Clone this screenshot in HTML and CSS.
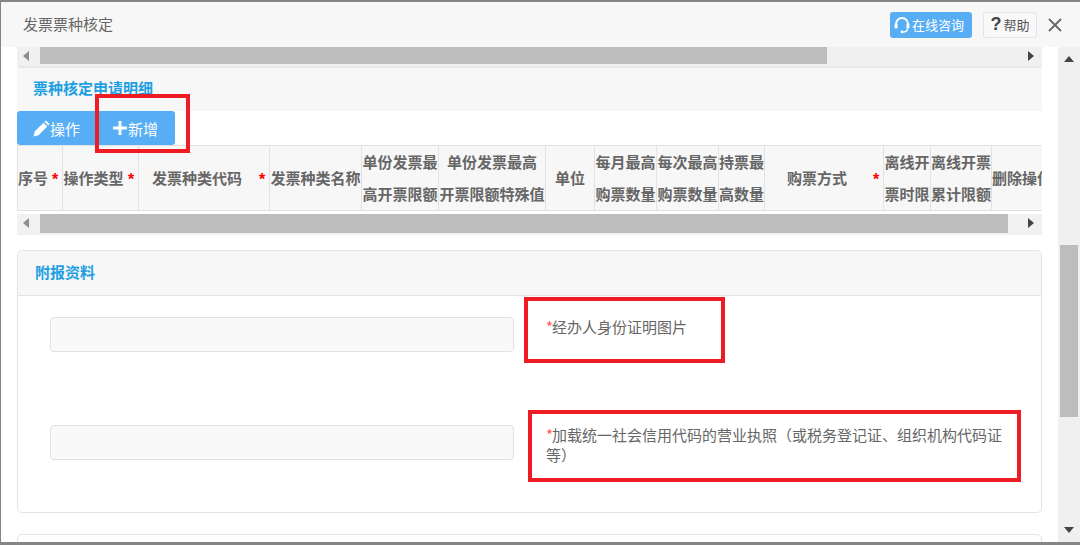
FILE: index.html
```html
<!DOCTYPE html>
<html lang="zh">
<head>
<meta charset="utf-8">
<title>发票票种核定</title>
<link rel="stylesheet" href="styles.css">
</head>
<body>
<div class="dialog">
  <header class="dlg-head">
    <h1 class="dlg-title">发票票种核定</h1>
    <a class="btn-online">
      <svg class="ico-headset" viewBox="0 0 16 18" width="16" height="18"><path d="M2 11V8a6 6 0 0 1 12 0v3" fill="none" stroke="#fff" stroke-width="1.8"/><rect x="0.6" y="7.5" width="3" height="5" rx="1.2" fill="#fff"/><rect x="12.4" y="7.5" width="3" height="5" rx="1.2" fill="#fff"/><path d="M13.5 12.5c0 2.5-2 3.6-5 3.6" fill="none" stroke="#fff" stroke-width="1.4"/><circle cx="8" cy="16" r="1.4" fill="#fff"/></svg>
      <span>在线咨询</span>
    </a>
    <a class="btn-help"><span class="q">?</span><span>帮助</span></a>
    <svg class="ico-close" viewBox="0 0 14 14" width="14" height="14"><path d="M1 1l12 12M13 1L1 13" stroke="#666" stroke-width="1.8" fill="none"/></svg>
  </header>
  <div class="dlg-main">
    <div class="content">
      <div class="hbar hbar-top">
        <i class="arr arr-l"></i><i class="thumb thumb-a"></i><i class="arr arr-r"></i>
      </div>
      <div class="section-title"><h2>票种核定申请明细</h2></div>
      <div class="btn-group">
        <a class="tool-btn tool-a">
          <svg viewBox="0 0 17 17" width="17" height="17"><path d="M0.500 16.500l1.200-5L10.500 2.700l3.800 3.800-8.800 8.800z M11.500 1.700l1.400-1.200 3.600 3.600-1.200 1.400z" fill="#fff"/></svg>操作
        </a>
        <a class="tool-btn tool-b">
          <svg viewBox="0 0 14 14" width="14" height="14"><path d="M5.500 0h3v5.500H14v3H8.500V14h-3V8.500H0v-3h5.500z" fill="#fff"/></svg>新增
        </a>
      </div>
      <div class="table-wrap">
        <table class="grid">
          <colgroup>
            <col class="c1"><col class="c2"><col class="c3"><col class="c4"><col class="c5"><col class="c6"><col class="c7"><col class="c8"><col class="c9"><col class="c10"><col class="c11"><col class="c12"><col class="c13"><col class="c14">
          </colgroup>
          <tr>
            <th><div class="req"><span>序号</span><b>*</b></div></th>
            <th><div class="req"><span>操作类型</span><b>*</b></div></th>
            <th><div class="req"><span>发票种类代码</span><b>*</b></div></th>
            <th>发票种类名称</th>
            <th>单份发票最<br>高开票限额</th>
            <th>单份发票最高<br>开票限额特殊值</th>
            <th>单位</th>
            <th>每月最高<br>购票数量</th>
            <th>每次最高<br>购票数量</th>
            <th>持票最<br>高数量</th>
            <th><div class="req"><span>购票方式</span><b>*</b></div></th>
            <th>离线开<br>票时限</th>
            <th>离线开票<br>累计限额</th>
            <th class="last">删除操作</th>
          </tr>
        </table>
      </div>
      <div class="hbar hbar-low">
        <i class="arr arr-l"></i><i class="thumb thumb-b"></i><i class="arr arr-r"></i>
      </div>
      <section class="panel">
        <div class="panel-head"><h2>附报资料</h2></div>
        <div class="panel-body">
          <div class="row">
            <div class="file-input"></div>
            <p class="label"><em>*</em>经办人身份证明图片</p>
          </div>
          <div class="row">
            <div class="file-input"></div>
            <p class="label"><em>*</em>加载统一社会信用代码的营业执照（或税务登记证、组织机构代码证等）</p>
          </div>
        </div>
      </section>
      <section class="panel panel-next"></section>
    </div>
    <div class="vbar">
      <i class="arr arr-u"></i><i class="vthumb"></i><i class="arr arr-d"></i>
    </div>
  </div>
</div>
<div class="mark mark-1"></div>
<div class="mark mark-2"></div>
<div class="mark mark-3"></div>
</body>
</html>
```

FILE: styles.css
```css
* { box-sizing: border-box; }
html, body { margin: 0; padding: 0; }
body {
  width: 1080px;
  height: 545px;
  overflow: hidden;
  background: #858585;
  font-family: "Noto Sans CJK SC", "Liberation Sans", sans-serif;
  font-size: 15px;
  color: #666;
  position: relative;
}
h1, h2, p { margin: 0; font-size: 15px; }
.dialog {
  margin: 2px 0 0 1px;
  width: 1079px;
  height: 540px;
  background: #fff;
  display: flex;
  flex-direction: column;
  overflow: hidden;
}
.dlg-head {
  height: 45px;
  flex: none;
  background: #f7f7f7;
  display: flex;
  align-items: center;
  padding: 0 18px 4px 22px;
}
.dlg-title { font-weight: 400; color: #666; line-height: 20px; margin-right: auto; margin-top: 2px; }
.btn-online {
  width: 82px;
  height: 26px;
  background: #57aef5;
  border-radius: 3px;
  color: #fff;
  font-size: 13px;
  display: flex;
  align-items: center;
  padding-left: 4px;
  gap: 2px;
  margin-top: 4px;
}
.btn-help {
  width: 54px;
  height: 26px;
  margin: 4px 11px 0 11px;
  border: 1px solid #e4e4e4;
  border-radius: 3px;
  background: #f9f9f9;
  font-size: 13px;
  color: #555;
  display: flex;
  align-items: center;
  justify-content: center;
}
.q { font: bold 18px "Liberation Sans", sans-serif; color: #444; margin-right: 2px; }
.ico-close { margin-top: 4px; flex: none; }
.dlg-main { flex: 1; display: flex; min-height: 0; }
.content { width: 1057px; padding: 0 16px; overflow: hidden; }
.hbar {
  height: 21px;
  background: #f0f0f0;
  display: flex;
  align-items: flex-start;
}
.hbar-top { border-bottom: 2px solid #e8e8e8; border-radius: 0 0 3px 3px; }
.hbar-low { height: 21px; margin-top: 3px; background: #f1f1f1; }
.arr { display: block; width: 0; height: 0; border-style: solid; flex: none; }
.arr-l { border-width: 5px 6px 5px 0; border-color: transparent #8e8e8e transparent transparent; margin: 4px 11px 0 6px; }
.arr-r { border-width: 5px 0 5px 6px; border-color: transparent transparent transparent #444; margin: 4px 8px 0 auto; }
.thumb { display: block; background: #bdbdbd; height: 18px; flex: none; }
.thumb-a { width: 787px; height: 17px; }
.thumb-b { width: 968px; height: 19px; }
.section-title {
  height: 43px;
  background: #f7f7f7;
  padding: 10px 16px 0;
}
.section-title h2, .panel-head h2 { color: #1d9fe2; font-weight: 700; line-height: 20px; }
.btn-group { display: flex; height: 34px; }
.tool-btn {
  height: 34px;
  background: #57aef5;
  color: #fff;
  font-size: 15px;
  display: flex;
  align-items: center;
  border-radius: 3px 0 0 3px;
}
.tool-a { width: 79px; padding-left: 16px; gap: 0; }
.tool-b { width: 79px; padding-left: 17px; gap: 1px; border-radius: 0 3px 3px 0; }
.table-wrap { width: 1025px; overflow: hidden; }
.grid {
  table-layout: fixed;
  border-collapse: collapse;
  width: 1074px;
  height: 66px;
  background: #f7f7f7;
}
.c1 { width: 45px; } .c2 { width: 76px; } .c3 { width: 131px; } .c4 { width: 92px; }
.c5 { width: 77px; } .c6 { width: 107px; } .c7 { width: 49px; } .c8 { width: 62px; }
.c9 { width: 62px; } .c10 { width: 46px; } .c11 { width: 119px; } .c12 { width: 47px; }
.c13 { width: 61px; } .c14 { width: 100px; }
.grid th {
  border: 1px solid #e2e2e2;
  border-left-width: 1px;
  padding: 0;
  font-size: 15px;
  font-weight: 700;
  color: #666;
  line-height: 32px;
  text-align: center;
  white-space: nowrap;
  overflow: hidden;
}
.grid th.last { text-align: left; }
.req { display: flex; align-items: center; }
.req span { flex: 1; text-align: center; }
.req b { color: #f00; width: 14px; font: bold 16px "Liberation Sans", sans-serif; text-align: center; padding-top: 4px; }
.panel {
  margin-top: 15px;
  border: 1px solid #e4e4e4;
  border-radius: 5px;
  height: 263px;
}
.panel-head {
  height: 45px;
  background: #f7f7f7;
  border-bottom: 1px solid #e4e4e4;
  border-radius: 5px 5px 0 0;
  padding: 11px 17px 0;
}
.panel-body { padding: 21px 0 0 32px; }
.row { display: flex; height: 108px; align-items: flex-start; }
.file-input {
  width: 464px;
  height: 35px;
  flex: none;
  background: #f9f9f9;
  border: 1px solid #e2e2e2;
  border-radius: 4px;
}
.label {
  margin-left: 32px;
  width: 470px;
  font-size: 15px;
  line-height: 20px;
  color: #666;
  font-feature-settings: "chws" 0, "halt" 0, "palt" 0;
}
.label em { color: #f55; font-style: normal; margin-right: -1px; }
.panel-next { margin-top: 21px; }
.vbar {
  width: 22px;
  flex: none;
  background: #f0f0f0;
  display: flex;
  flex-direction: column;
  align-items: center;
  height: 495px;
}
.arr-u { border-width: 0 5px 6px; border-color: transparent transparent #444; margin-top: 9px; }
.arr-d { border-width: 6px 5px 0; border-color: #444 transparent transparent; margin-top: auto; margin-bottom: 9px; }
.vthumb { display: block; width: 18px; height: 172px; background: #bdbdbd; margin-top: 183px; }
.mark { position: absolute; border: 4px solid #ee1c25; }
.mark-1 { left: 95px; top: 94px; width: 95px; height: 59px; }
.mark-2 { left: 524px; top: 297px; width: 201px; height: 66px; }
.mark-3 { left: 528px; top: 410px; width: 493px; height: 72px; }
```
